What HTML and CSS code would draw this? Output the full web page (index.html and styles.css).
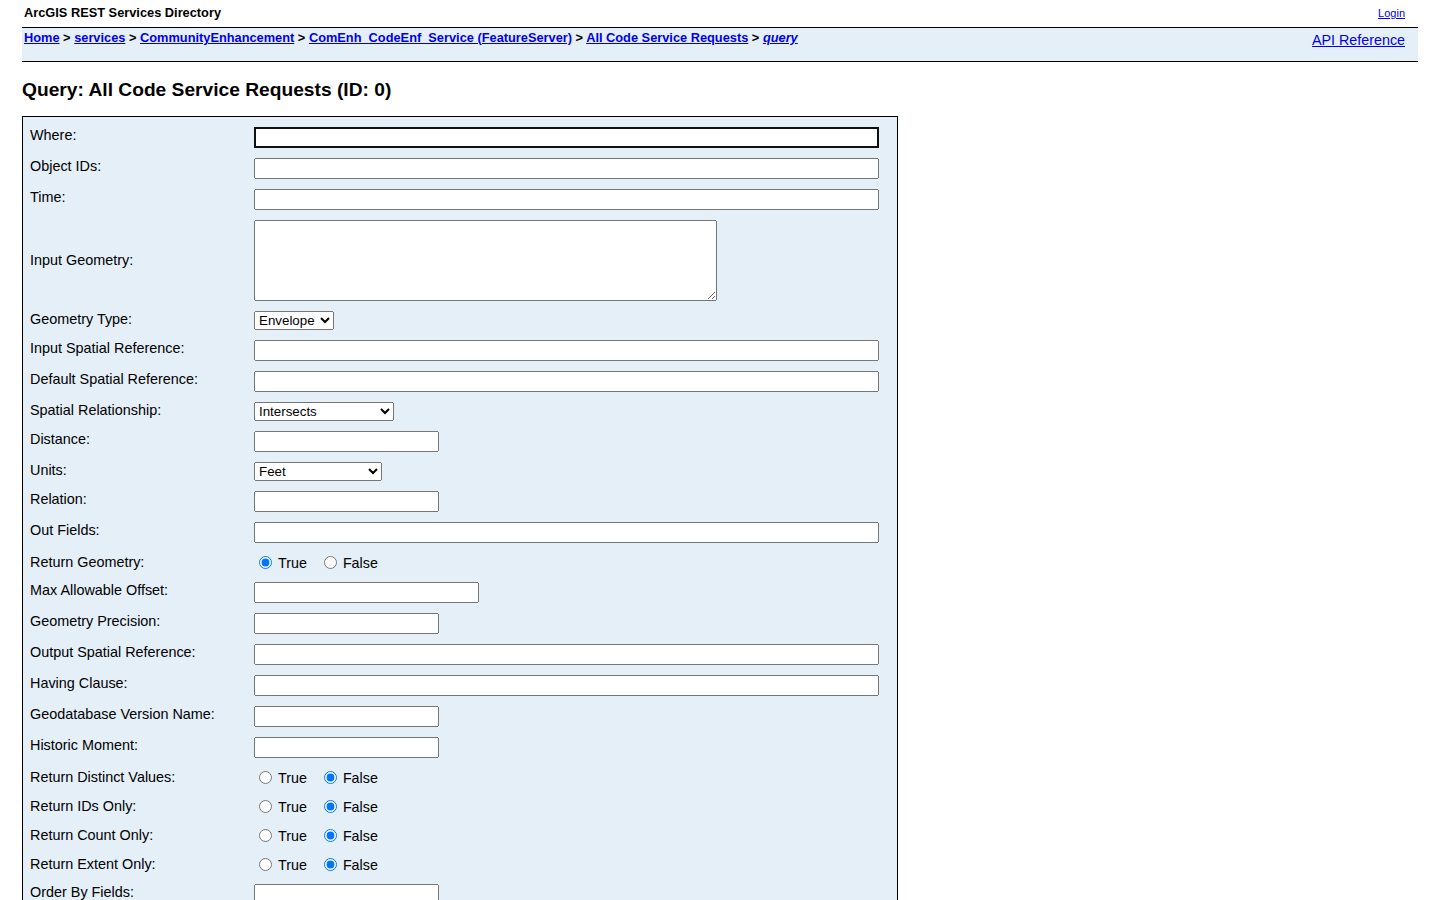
FILE: index.html
```html
<!DOCTYPE html>
<html>
    <head>
        <title>Query: All Code Service Requests (ID: 0)</title>
        <link rel="stylesheet" href="styles.css">
    </head>
    <body>
        <div class="page">

            <div class="userTable">
                <div class="titlecell">ArcGIS REST Services Directory</div>
                <a class="login" href="#">Login</a>
            </div>

            <div class="navTable">
                <div class="breadcrumbs">
                    <a href="#">Home</a> &gt;
                    <a href="#">services</a> &gt;
                    <a href="#">CommunityEnhancement</a> &gt;
                    <a href="#">ComEnh_CodeEnf_Service (FeatureServer)</a> &gt;
                    <a href="#">All Code Service Requests</a> &gt;
                    <a href="#"><i>query</i></a>
                </div>
                <a class="apiref" href="#">API Reference</a>
            </div>

            <h2>Query: All Code Service Requests (ID: 0)</h2>

            <form class="formTable">

                <label class="lbl">Where:</label>
                <div class="fld"><input type="text" class="full focused"></div>

                <label class="lbl">Object IDs:</label>
                <div class="fld"><input type="text" class="full"></div>

                <label class="lbl">Time:</label>
                <div class="fld"><input type="text" class="full"></div>

                <label class="lbl middle">Input Geometry:</label>
                <div class="fld"><textarea class="geom"></textarea></div>

                <label class="lbl">Geometry Type:</label>
                <div class="fld">
                    <select>
                        <option>Envelope</option>
                        <option>Point</option>
                        <option>Polyline</option>
                        <option>Polygon</option>
                        <option>Multipoint</option>
                    </select>
                </div>

                <label class="lbl">Input Spatial Reference:</label>
                <div class="fld"><input type="text" class="full"></div>

                <label class="lbl">Default Spatial Reference:</label>
                <div class="fld"><input type="text" class="full"></div>

                <label class="lbl">Spatial Relationship:</label>
                <div class="fld">
                    <select class="rel">
                        <option>Intersects</option>
                        <option>Contains</option>
                        <option>Crosses</option>
                        <option>Envelope Intersects</option>
                        <option>Index Intersects</option>
                        <option>Overlaps</option>
                        <option>Touches</option>
                        <option>Within</option>
                        <option>Relation</option>
                    </select>
                </div>

                <label class="lbl">Distance:</label>
                <div class="fld"><input type="text" class="short"></div>

                <label class="lbl">Units:</label>
                <div class="fld">
                    <select class="units">
                        <option>Feet</option>
                        <option>Meters</option>
                        <option>Kilometers</option>
                        <option>Nautical Miles</option>
                        <option>US Nautical Miles</option>
                    </select>
                </div>

                <label class="lbl">Relation:</label>
                <div class="fld"><input type="text" class="short"></div>

                <label class="lbl">Out Fields:</label>
                <div class="fld"><input type="text" class="full"></div>

                <label class="lbl radiolbl">Return Geometry:</label>
                <div class="fld radios">
                    <label class="opt"><input type="radio" name="returnGeometry" checked> True</label>
                    <label class="opt"><input type="radio" name="returnGeometry"> False</label>
                </div>

                <label class="lbl">Max Allowable Offset:</label>
                <div class="fld"><input type="text" class="medium"></div>

                <label class="lbl">Geometry Precision:</label>
                <div class="fld"><input type="text" class="short"></div>

                <label class="lbl">Output Spatial Reference:</label>
                <div class="fld"><input type="text" class="full"></div>

                <label class="lbl">Having Clause:</label>
                <div class="fld"><input type="text" class="full"></div>

                <label class="lbl">Geodatabase Version Name:</label>
                <div class="fld"><input type="text" class="short"></div>

                <label class="lbl">Historic Moment:</label>
                <div class="fld"><input type="text" class="short"></div>

                <label class="lbl radiolbl">Return Distinct Values:</label>
                <div class="fld radios">
                    <label class="opt"><input type="radio" name="returnDistinctValues"> True</label>
                    <label class="opt"><input type="radio" name="returnDistinctValues" checked> False</label>
                </div>

                <label class="lbl radiolbl">Return IDs Only:</label>
                <div class="fld radios">
                    <label class="opt"><input type="radio" name="returnIdsOnly"> True</label>
                    <label class="opt"><input type="radio" name="returnIdsOnly" checked> False</label>
                </div>

                <label class="lbl radiolbl">Return Count Only:</label>
                <div class="fld radios">
                    <label class="opt"><input type="radio" name="returnCountOnly"> True</label>
                    <label class="opt"><input type="radio" name="returnCountOnly" checked> False</label>
                </div>

                <label class="lbl radiolbl">Return Extent Only:</label>
                <div class="fld radios">
                    <label class="opt"><input type="radio" name="returnExtentOnly"> True</label>
                    <label class="opt"><input type="radio" name="returnExtentOnly" checked> False</label>
                </div>

                <label class="lbl">Order By Fields:</label>
                <div class="fld"><input type="text" class="short"></div>

                <label class="lbl">Group By Fields (ForStatistics):</label>
                <div class="fld"><input type="text" class="short"></div>

                <label class="lbl middle">Output Statistics:</label>
                <div class="fld"><textarea class="geom"></textarea></div>

                <label class="lbl radiolbl">Return Z:</label>
                <div class="fld radios">
                    <label class="opt"><input type="radio" name="returnZ"> True</label>
                    <label class="opt"><input type="radio" name="returnZ" checked> False</label>
                </div>

                <label class="lbl radiolbl">Return M:</label>
                <div class="fld radios">
                    <label class="opt"><input type="radio" name="returnM"> True</label>
                    <label class="opt"><input type="radio" name="returnM" checked> False</label>
                </div>

                <label class="lbl">Result Offset:</label>
                <div class="fld"><input type="text" class="short"></div>

                <label class="lbl">Result Record Count:</label>
                <div class="fld"><input type="text" class="short"></div>

                <label class="lbl">Format:</label>
                <div class="fld">
                    <select>
                        <option>HTML</option>
                        <option>JSON</option>
                        <option>GeoJSON</option>
                        <option>PBF</option>
                    </select>
                </div>

                <div class="lbl"></div>
                <div class="fld buttons">
                    <input type="button" value="Query (GET)">
                    <input type="button" value="Query (POST)">
                </div>

            </form>

        </div>
    </body>
</html>
```

FILE: styles.css
```css
body{
    margin: 0;
    font-family: "Liberation Sans", Arial, Helvetica, sans-serif;
    color: #000;
}

.page{
    padding: 0 22px 30px 22px;
}

a{
    color: #0000ee;
}

.userTable{
    display: flex;
    justify-content: space-between;
    align-items: flex-start;
    height: 27px;
    box-sizing: border-box;
    padding: 5px 13px 0 2px;
}

.titlecell{
    font-size: 12.8px;
    font-weight: bold;
    line-height: 15px;
}

.login{
    font-size: 11px;
    line-height: 14px;
    padding-top: 1px;
}

.navTable{
    display: flex;
    justify-content: space-between;
    align-items: flex-start;
    height: 33px;
    padding: 0 13px 0 2px;
    background-color: #e5eff8;
    border-top: 1px solid #000;
    border-bottom: 1px solid #000;
}

.breadcrumbs{
    padding-top: 2px;
    font-size: 12.8px;
    font-weight: bold;
    line-height: 15px;
}

.apiref{
    padding-top: 4px;
    font-size: 14.3px;
    line-height: 16px;
}

h2{
    margin: 17px 0 15px 0;
    font-size: 19.2px;
    line-height: 22px;
    font-weight: bold;
}

.formTable{
    display: grid;
    grid-template-columns: 231px 1fr;
    align-items: start;
    width: 876px;
    box-sizing: border-box;
    padding: 5px 0;
    border: 1px solid #000;
    background-color: #e5eff8;
}

.lbl{
    padding: 5px 0 5px 7px;
    font-size: 14.4px;
    line-height: 16px;
}

.lbl.middle{
    align-self: center;
    padding-bottom: 7px;
}

.lbl.radiolbl{
    padding-top: 6px;
}

.fld{
    padding: 5px 0;
}

.fld input[type="text"],
.fld textarea,
.fld select{
    display: block;
    box-sizing: border-box;
    margin: 0;
    font-family: "Liberation Sans", Arial, sans-serif;
    font-size: 13.33px;
}

.fld input[type="text"]{
    height: 21px;
}

.full{
    width: 625px;
}

.short{
    width: 185px;
}

.medium{
    width: 225px;
}

.focused{
    outline: 2px solid #101010;
    outline-offset: -2px;
}

.geom{
    width: 463px;
    height: 81px;
}

.fld select{
    height: 19px;
}

.rel{
    width: 140px;
}

.units{
    width: 128px;
}

.radios{
    display: flex;
    align-items: center;
    height: 19px;
    font-size: 14.3px;
}

.opt{
    display: flex;
    align-items: center;
    margin-right: 12px;
}

.opt input{
    margin: 0 6px 0 5px;
}

.buttons input{
    font-family: "Liberation Sans", Arial, sans-serif;
    font-size: 13.33px;
    margin-right: 6px;
}
```
